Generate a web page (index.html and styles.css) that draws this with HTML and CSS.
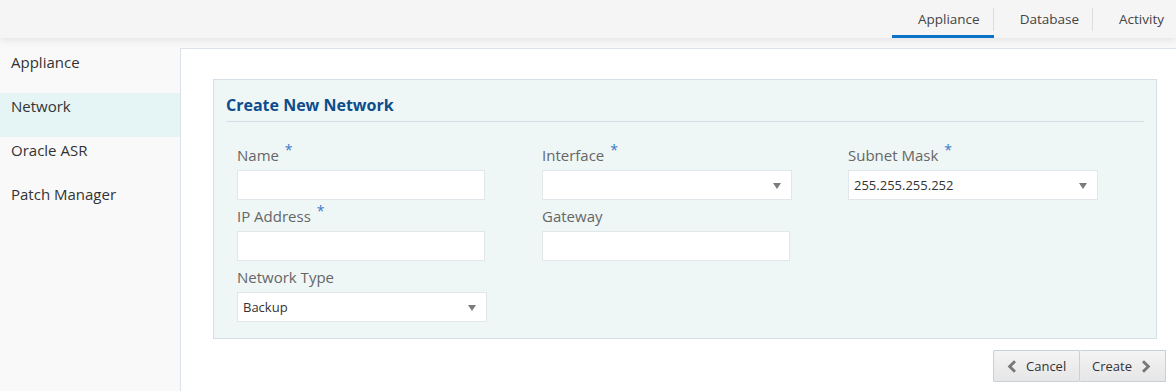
FILE: index.html
```html
<!DOCTYPE html>
<html>
<head>
<meta charset="utf-8">
<link rel="stylesheet" href="styles.css">
</head>
<body>
<header class="topbar">
  <nav class="tabs">
    <div class="tab active">Appliance</div>
    <div class="tab">Database</div>
    <div class="tab last">Activity</div>
  </nav>
</header>
<div class="layout">
  <aside class="sidenav">
    <div class="nav-item">Appliance</div>
    <div class="nav-item selected">Network</div>
    <div class="nav-item">Oracle ASR</div>
    <div class="nav-item">Patch Manager</div>
  </aside>
  <main class="panel">
    <section class="formbox">
      <h2 class="title">Create New Network</h2>
      <div class="grid">
        <div class="field">
          <label class="lbl">Name <span class="req">*</span></label>
          <div class="input"></div>
        </div>
        <div class="field">
          <label class="lbl">Interface <span class="req">*</span></label>
          <div class="select"><span class="val"></span><span class="caret"></span></div>
        </div>
        <div class="field">
          <label class="lbl">Subnet Mask <span class="req">*</span></label>
          <div class="select"><span class="val">255.255.255.252</span><span class="caret"></span></div>
        </div>
        <div class="field">
          <label class="lbl">IP Address <span class="req">*</span></label>
          <div class="input"></div>
        </div>
        <div class="field">
          <label class="lbl">Gateway</label>
          <div class="input"></div>
        </div>
        <div class="field"></div>
        <div class="field">
          <label class="lbl">Network Type</label>
          <div class="select"><span class="val">Backup</span><span class="caret"></span></div>
        </div>
      </div>
    </section>
    <div class="actions">
      <button class="btn">
        <svg class="chev" width="10" height="13" viewBox="0 0 10 13"><path d="M8 1.2 L2.6 6.5 L8 11.8" fill="none" stroke="#777" stroke-width="2.8"/></svg>
        <span>Cancel</span>
      </button>
      <button class="btn">
        <span>Create</span>
        <svg class="chev" width="10" height="13" viewBox="0 0 10 13"><path d="M2 1.2 L7.4 6.5 L2 11.8" fill="none" stroke="#777" stroke-width="2.8"/></svg>
      </button>
    </div>
  </main>
</div>
</body>
</html>
```
FILE: styles.css
```css
* { box-sizing: border-box; }
html, body {
  margin: 0;
  padding: 0;
  height: 100%;
}
body {
  font-family: "Open Sans", "Noto Sans", sans-serif;
  background: #f8f8f8;
  color: #333;
  overflow: hidden;
}
.topbar {
  height: 38px;
  background: #f5f5f5;
  box-shadow: 0 2px 7px rgba(0, 0, 0, 0.09);
  display: flex;
  justify-content: flex-end;
  position: relative;
  z-index: 2;
}
.tabs {
  display: flex;
  align-items: stretch;
}
.tab {
  font-size: 13.5px;
  color: #444;
  padding: 0 14px 0 26px;
  display: flex;
  align-items: center;
  position: relative;
  border-bottom: 3px solid transparent;
  padding-top: 3px;
}
.tab::after {
  content: "";
  position: absolute;
  right: 0;
  top: 8px;
  height: 23px;
  width: 1px;
  background: #dcdcdc;
}
.tab.last::after { display: none; }
.tab.last { padding-right: 12px; }
.tab.active {
  border-bottom-color: #0a72c8;
}
.layout {
  display: flex;
  height: calc(100% - 38px);
  padding-top: 10px;
}
.sidenav {
  width: 180px;
  flex: none;
  background: #f9f9f9;
  margin-top: 1px;
}
.nav-item {
  height: 44px;
  padding: 3px 11px 0;
  line-height: 20px;
  font-size: 15px;
  color: #333;
}
.nav-item.selected {
  background: #e5f5f6;
}
.panel {
  flex: 1;
  background: #fff;
  border-left: 1px solid #dbe2e9;
  border-top: 1px solid #dbe2e9;
  padding: 30px 10px 0 32px;
}
.formbox {
  width: 944px;
  background: #eef6f6;
  border: 1px solid #d6dfe5;
  padding: 13px 12px 16px 12px;
}
.title {
  margin: 0;
  font-size: 16px;
  font-weight: 700;
  color: #0e4c8a;
  line-height: 24px;
  padding-bottom: 4px;
  border-bottom: 1px solid #d7dde4;
}
.grid {
  display: grid;
  grid-template-columns: 305px 306px 305px;
  padding: 23px 0 0 11px;
  row-gap: 6px;
}
.field {
  display: flex;
  flex-direction: column;
}
.lbl {
  font-size: 15px;
  line-height: 20px;
  height: 20px;
  color: #666;
  margin-bottom: 5px;
}
.req {
  color: #3c78cc;
  font-size: 14px;
  line-height: 0;
  position: relative;
  top: -6px;
  margin-left: 2px;
}
.input {
  width: 248px;
  height: 30px;
  background: #fff;
  border: 1px solid #e1e6ea;
}
.select {
  width: 250px;
  height: 30px;
  background: #fff;
  border: 1px solid #e1e6ea;
  display: flex;
  align-items: center;
  justify-content: space-between;
  padding: 0 10px 0 5px;
  font-size: 13px;
  color: #333;
}
.caret {
  width: 0;
  height: 0;
  border-left: 4.5px solid transparent;
  border-right: 4.5px solid transparent;
  border-top: 6px solid #7b7b7b;
  margin-top: 1px;
}
.actions {
  display: flex;
  justify-content: flex-end;
  margin-top: 11px;
}
.btn {
  height: 32px;
  font-family: "Open Sans", "Noto Sans", sans-serif;
  font-size: 13px;
  color: #333;
  background: linear-gradient(#f4f4f4, #e6e6e6);
  border: 1px solid #c9d1d8;
  display: flex;
  align-items: center;
  gap: 9px;
  padding: 0 12px 0 13px;
  margin: 0;
  border-radius: 1px;
}
.btn + .btn {
  border-left: none;
  padding: 0 12px 0 12px;
}
.btn:first-child { width: 87px; }
.btn:last-child { width: 86px; }
.chev { flex: none; }
```
